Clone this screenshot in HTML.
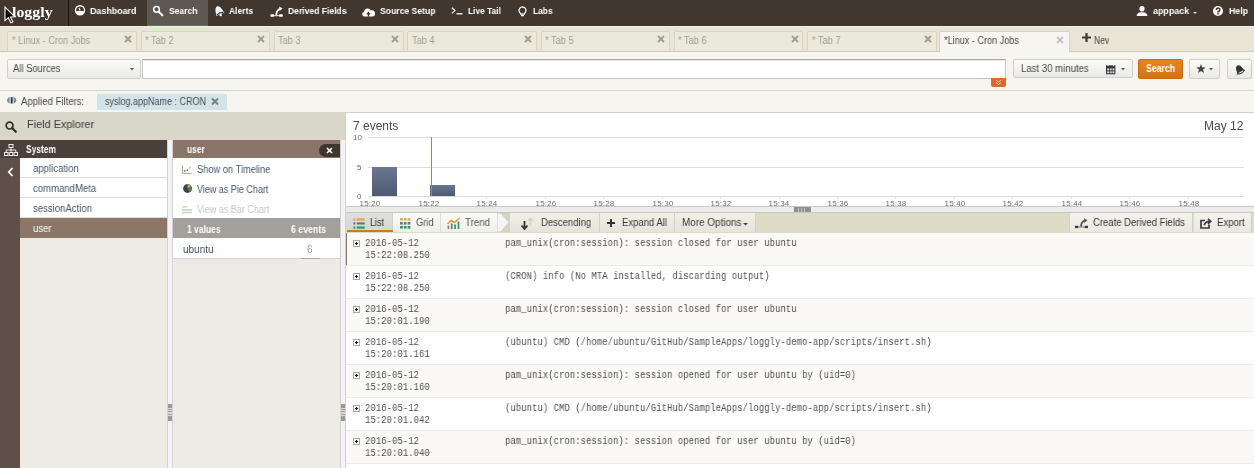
<!DOCTYPE html>
<html><head><meta charset="utf-8"><style>
*{box-sizing:border-box;margin:0;padding:0}
html,body{width:1254px;height:468px;overflow:hidden;background:#f6f5f0;font-family:"Liberation Sans",sans-serif;font-size:10px;color:#333}
body{position:relative}
div,span,svg{position:absolute}
.s{white-space:nowrap;line-height:12px;font-size:10px;transform-origin:0 0;will-change:transform}
.b{font-weight:bold}
.w{color:#fff}
.m{font-family:"Liberation Mono",monospace;font-size:10px;line-height:12px;white-space:nowrap;transform-origin:0 0;color:#505050;will-change:transform}
.btn{border:1px solid #cfcfca;border-radius:2px;background:linear-gradient(#fbfbfa,#e9e9e5)}
</style></head><body>
<div style="left:0px;top:0px;width:1254px;height:26px;background:#41372f;"></div>
<div style="left:68px;top:0px;width:1px;height:26px;background:#1c1612;"></div>
<div style="left:147px;top:0px;width:61px;height:26px;background:#5f5751;"></div>
<div style="left:147px;top:25px;width:61px;height:1px;background:#9a5a38;"></div>
<div class="s w" style="left:12.4px;top:2.7px;transform:scaleX(1.06);font-family:'Liberation Serif',serif;font-size:15px;line-height:18px;font-weight:bold">loggly</div>
<div class="s w b" style="left:90.2px;top:5.2px;transform:scaleX(0.9368);font-size:9.5px">Dashboard</div>
<div class="s w b" style="left:168.5px;top:5.2px;transform:scaleX(0.8947);font-size:9.5px">Search</div>
<div class="s w b" style="left:228.8px;top:5.2px;transform:scaleX(0.8947);font-size:9.5px">Alerts</div>
<div class="s w b" style="left:288.2px;top:5.2px;transform:scaleX(0.9);font-size:9.5px">Derived Fields</div>
<div class="s w b" style="left:380px;top:5.2px;transform:scaleX(0.9053);font-size:9.5px">Source Setup</div>
<div class="s w b" style="left:468px;top:5.2px;transform:scaleX(0.8789);font-size:9.5px">Live Tail</div>
<div class="s w b" style="left:533px;top:5.2px;transform:scaleX(0.8842);font-size:9.5px">Labs</div>
<div class="s w b" style="left:1152.5px;top:5.2px;transform:scaleX(0.9368);font-size:9.5px">apppack</div>
<div class="s w b" style="left:1228.5px;top:5.2px;transform:scaleX(0.9263);font-size:9.5px">Help</div>
<svg style="left:74px;top:4px" width="12" height="13" viewBox="0 0 12 13"><circle cx="6" cy="6.3" r="4.55" stroke="#fff" stroke-width="1.3" fill="none"/><path d="M1.6 7.4 Q6 6.2 10.4 7.4 A4.5 4.5 0 0 1 1.6 7.4 Z" fill="#fff"/><path d="M4.9 3.9 L6.1 6.2" stroke="#fff" stroke-width="1.1"/></svg>
<svg style="left:152px;top:4px" width="12" height="13" viewBox="0 0 12 13"><circle cx="4.5" cy="5.3" r="2.9" stroke="#fff" stroke-width="1.5" fill="none"/><path d="M7 8 L10.3 11.2" stroke="#fff" stroke-width="2.1" stroke-linecap="round"/></svg>
<svg style="left:213px;top:4px" width="12" height="13" viewBox="0 0 12 13"><g transform="rotate(-22 6 7)"><path d="M1.5 10.5 C2.8 8.5 2 3 6 2 C10 3 9.2 8.5 10.5 10.5 Z" fill="#fff"/><path d="M2.2 9.8 Q6 8.2 9.8 9.8" stroke="#41372f" stroke-width="1.1" fill="none"/><circle cx="6" cy="11.4" r="1.2" fill="#fff"/></g></svg>
<svg style="left:270px;top:5px" width="14" height="13" viewBox="0 0 14 13"><rect x="0.4" y="9.2" width="3.8" height="2.6" rx=".8" fill="#fff"/><rect x="9" y="9.2" width="3.8" height="2.6" rx=".8" fill="#fff"/><rect x="4" y="10" width="5" height="1.2" fill="#cfc8c0"/><path d="M6.3 10.2 C6.4 6.6 7.6 4.6 10.2 3.8" stroke="#fff" stroke-width="1.8" fill="none"/><path d="M9.2 1.4 L12.6 3.4 L9.6 6 Z" fill="#fff"/></svg>
<svg style="left:362px;top:7px" width="13" height="10" viewBox="0 0 13 10"><path d="M2.6 9.6 A2.5 2.5 0 0 1 2 4.7 A3.7 3.7 0 0 1 8.9 3.4 A3.1 3.1 0 0 1 10.7 9.6 Z" fill="#fff"/><path d="M6.5 9.6 V6.2 M4.9 7.4 L6.5 5.6 L8.1 7.4" stroke="#41372f" stroke-width="1.3" fill="none"/></svg>
<svg style="left:451px;top:7px" width="12" height="8" viewBox="0 0 12 8"><path d="M0.8 0.8 L4 3.6 L0.8 6.4" stroke="#fff" stroke-width="1.2" fill="none"/><path d="M5.5 6.8 H11.5" stroke="#fff" stroke-width="1.3"/></svg>
<svg style="left:518px;top:6px" width="9" height="11" viewBox="0 0 9 11"><path d="M4.5 0.8 A3.6 3.6 0 0 1 6.6 7.2 L6.4 8.2 H2.6 L2.4 7.2 A3.6 3.6 0 0 1 4.5 0.8 Z" stroke="#fff" stroke-width="1.2" fill="none"/><path d="M3 9.6 H6" stroke="#fff" stroke-width="1.3"/></svg>
<svg style="left:1136px;top:6px" width="12" height="10" viewBox="0 0 12 10"><ellipse cx="6" cy="2.8" rx="2.6" ry="2.8" fill="#fff"/><path d="M0.6 10 C1 6.6 4 6.4 6 6.3 C8 6.4 11 6.6 11.4 10 Z" fill="#fff"/></svg>
<svg style="left:1193px;top:11.5px" width="4" height="2" viewBox="0 0 4 2"><path d="M0 0 H4 L2 2 Z" fill="#ddd"/></svg>
<svg style="left:1212.9px;top:6.1px" width="10" height="10" viewBox="0 0 10 10"><circle cx="5" cy="5" r="5" fill="#fff"/><path d="M3.3 3.9 A1.75 1.75 0 1 1 5 5.6 V6.4" stroke="#41372f" stroke-width="1.5" fill="none"/><rect x="4.25" y="7.1" width="1.5" height="1.5" fill="#41372f"/></svg>
<svg style="left:3.7px;top:5.9px" width="13" height="19" viewBox="0 0 13 19"><path d="M1 1 L1 14.6 L4.3 11.7 L6.9 16.8 L8.9 15.9 L6.5 10.9 L10.6 10.7 Z" fill="#000" stroke="#fff" stroke-width="1.1" stroke-linejoin="miter"/></svg>
<div style="left:0px;top:26px;width:1254px;height:26px;background:#e8e4d6;"></div>
<div style="left:0px;top:26px;width:1254px;height:1px;background:#f1eee3;"></div>
<div style="left:0px;top:51px;width:1254px;height:1px;background:#cdc9b8;"></div>
<div style="left:7.4px;top:31px;width:129.5px;height:21px;background:#ebe8dc;border:1px solid #d8d4c6;border-bottom:1px solid #cdc9b8;border-radius:2px 2px 0 0"></div>
<div class="s " style="left:11.7px;top:34.5px;transform:scaleX(0.92);color:#a19d8f">* Linux - Cron Jobs</div>
<svg style="left:124.0px;top:35.4px" width="8" height="8" viewBox="0 0 8 8"><path d="M1 1 L7 7 M7 1 L1 7" stroke="#a29e92" stroke-width="1.9"/></svg>
<div style="left:140.7px;top:31px;width:129.5px;height:21px;background:#ebe8dc;border:1px solid #d8d4c6;border-bottom:1px solid #cdc9b8;border-radius:2px 2px 0 0"></div>
<div class="s " style="left:145.0px;top:34.5px;transform:scaleX(0.92);color:#a19d8f">* Tab 2</div>
<svg style="left:257.29999999999995px;top:35.4px" width="8" height="8" viewBox="0 0 8 8"><path d="M1 1 L7 7 M7 1 L1 7" stroke="#a29e92" stroke-width="1.9"/></svg>
<div style="left:274.0px;top:31px;width:129.5px;height:21px;background:#ebe8dc;border:1px solid #d8d4c6;border-bottom:1px solid #cdc9b8;border-radius:2px 2px 0 0"></div>
<div class="s " style="left:278.3px;top:34.5px;transform:scaleX(0.92);color:#a19d8f">Tab 3</div>
<svg style="left:390.6px;top:35.4px" width="8" height="8" viewBox="0 0 8 8"><path d="M1 1 L7 7 M7 1 L1 7" stroke="#a29e92" stroke-width="1.9"/></svg>
<div style="left:407.3px;top:31px;width:129.5px;height:21px;background:#ebe8dc;border:1px solid #d8d4c6;border-bottom:1px solid #cdc9b8;border-radius:2px 2px 0 0"></div>
<div class="s " style="left:411.6px;top:34.5px;transform:scaleX(0.92);color:#a19d8f">Tab 4</div>
<svg style="left:523.9px;top:35.4px" width="8" height="8" viewBox="0 0 8 8"><path d="M1 1 L7 7 M7 1 L1 7" stroke="#a29e92" stroke-width="1.9"/></svg>
<div style="left:540.6px;top:31px;width:129.5px;height:21px;background:#ebe8dc;border:1px solid #d8d4c6;border-bottom:1px solid #cdc9b8;border-radius:2px 2px 0 0"></div>
<div class="s " style="left:544.9px;top:34.5px;transform:scaleX(0.92);color:#a19d8f">* Tab 5</div>
<svg style="left:657.2px;top:35.4px" width="8" height="8" viewBox="0 0 8 8"><path d="M1 1 L7 7 M7 1 L1 7" stroke="#a29e92" stroke-width="1.9"/></svg>
<div style="left:673.9px;top:31px;width:129.5px;height:21px;background:#ebe8dc;border:1px solid #d8d4c6;border-bottom:1px solid #cdc9b8;border-radius:2px 2px 0 0"></div>
<div class="s " style="left:678.1999999999999px;top:34.5px;transform:scaleX(0.92);color:#a19d8f">* Tab 6</div>
<svg style="left:790.5px;top:35.4px" width="8" height="8" viewBox="0 0 8 8"><path d="M1 1 L7 7 M7 1 L1 7" stroke="#a29e92" stroke-width="1.9"/></svg>
<div style="left:807.2px;top:31px;width:129.5px;height:21px;background:#ebe8dc;border:1px solid #d8d4c6;border-bottom:1px solid #cdc9b8;border-radius:2px 2px 0 0"></div>
<div class="s " style="left:811.5px;top:34.5px;transform:scaleX(0.92);color:#a19d8f">* Tab 7</div>
<svg style="left:923.8000000000001px;top:35.4px" width="8" height="8" viewBox="0 0 8 8"><path d="M1 1 L7 7 M7 1 L1 7" stroke="#a29e92" stroke-width="1.9"/></svg>
<div style="left:939px;top:31px;width:131px;height:21px;background:#f6f5f0;border:1px solid #d6d2c4;border-bottom:none;border-radius:2px 2px 0 0"></div>
<div class="s " style="left:943.5px;top:34.5px;transform:scaleX(0.91);color:#484848">*Linux - Cron Jobs</div>
<svg style="left:1056px;top:36px" width="8" height="8" viewBox="0 0 8 8"><path d="M1 1 L7 7 M7 1 L1 7" stroke="#c2c2c0" stroke-width="2"/></svg>
<svg style="left:1082px;top:33px" width="9" height="9" viewBox="0 0 9 9"><path d="M4.5 0 V9 M0 4.5 H9" stroke="#3d3a36" stroke-width="2.2"/></svg>
<div class="s " style="left:1094.2px;top:34.5px;transform:scaleX(0.85);color:#444">Nev</div>
<div style="left:0px;top:52px;width:1254px;height:38px;background:#f6f5f0;"></div>
<div style="left:0px;top:90px;width:1254px;height:1px;background:#d6d3ca;"></div>
<div class="btn" style="left:7px;top:59px;width:134px;height:20px"></div>
<div class="s " style="left:13.2px;top:63px;transform:scaleX(0.94);color:#4a4a4a">All Sources</div>
<svg style="left:130px;top:68px" width="4" height="3" viewBox="0 0 4 3"><path d="M0 0 H4 L2 2.5 Z" fill="#555"/></svg>
<div style="left:142px;top:59px;width:864px;height:20px;background:#fff;border:1px solid #c8c8c4;border-top-color:#a9a9a5;box-shadow:inset 0 1px 1px rgba(0,0,0,.1)"></div>
<div style="left:991px;top:78px;width:15px;height:9px;background:#d8692f;border-radius:0 0 2px 2px"></div>
<svg style="left:995px;top:79px" width="7" height="7" viewBox="0 0 7 7"><path d="M1 1 L3.5 3 L6 1 M1 3.5 L3.5 5.5 L6 3.5" stroke="#f3c9a8" stroke-width="1" fill="none"/></svg>
<div class="btn" style="left:1013px;top:59px;width:120px;height:19px"></div>
<div class="s " style="left:1020.5px;top:63px;transform:scaleX(0.96);color:#4a4a4a">Last 30 minutes</div>
<svg style="left:1106px;top:64.5px" width="10" height="10" viewBox="0 0 10 10"><rect x="0" y="0.3" width="9.4" height="9" fill="#363636"/><g fill="#d8d8d8"><rect x="1.1" y="3.4" width="1.9" height="2"/><rect x="3.8" y="3.4" width="1.9" height="2"/><rect x="6.5" y="3.4" width="1.9" height="2"/><rect x="1.1" y="6.3" width="1.9" height="2"/><rect x="3.8" y="6.3" width="1.9" height="2"/><rect x="6.5" y="6.3" width="1.9" height="2"/></g><rect x="1.5" y="0" width="1" height="1.2" fill="#eee"/><rect x="6.9" y="0" width="1" height="1.2" fill="#eee"/></svg>
<svg style="left:1121px;top:68px" width="4" height="3" viewBox="0 0 4 3"><path d="M0 0 H4 L2 2.5 Z" fill="#555"/></svg>
<div style="left:1138px;top:59px;width:45px;height:20px;background:linear-gradient(#e8841f,#d8720f);border:1px solid #c86a12;border-radius:2px"></div>
<div class="s w b" style="left:1145.5px;top:63px;transform:scaleX(0.87);">Search</div>
<div class="btn" style="left:1189px;top:59px;width:31px;height:20px"></div>
<svg style="left:1196px;top:64px" width="10" height="9" viewBox="0 0 10 9"><path d="M5 0 L6.2 3.3 L9.8 3.4 L7 5.5 L8 9 L5 7 L2 9 L3 5.5 L0.2 3.4 L3.8 3.3 Z" fill="#444"/></svg>
<svg style="left:1209px;top:68px" width="4" height="3" viewBox="0 0 4 3"><path d="M0 0 H4 L2 2.5 Z" fill="#555"/></svg>
<div class="btn" style="left:1227px;top:59px;width:25px;height:20px"></div>
<svg style="left:1234px;top:63.5px" width="11" height="11" viewBox="0 0 11 11"><g transform="rotate(-28 5.5 5.5)"><path d="M1.5 8.2 C2.6 6.4 1.8 1.6 5.5 1 C9.2 1.6 8.4 6.4 9.5 8.2 Z" fill="#333"/><path d="M1.3 8.4 Q5.5 6.6 9.7 8.4 Q5.5 11 1.3 8.4 Z" fill="#fff" stroke="#333" stroke-width=".9"/></g></svg>
<div style="left:0px;top:91px;width:1254px;height:21px;background:#f6f5f0;"></div>
<svg style="left:7.2px;top:97.2px" width="9.4" height="6.6" viewBox="0 0 9.4 6.6"><ellipse cx="4.7" cy="3.3" rx="4.6" ry="3.2" fill="#7f8b93"/><rect x="2.4" y="0.6" width="1.5" height="5.4" fill="#c3cace"/><rect x="5.5" y="0.6" width="1.5" height="5.4" fill="#c3cace"/><rect x="3.9" y="0.3" width="1.6" height="6" fill="#34404a"/></svg>
<div class="s " style="left:20.5px;top:96px;transform:scaleX(0.955);color:#484848">Applied Filters:</div>
<div style="left:97px;top:94px;width:130px;height:16px;background:#d3e4e9;"></div>
<div class="s " style="left:104.8px;top:96px;transform:scaleX(0.9);color:#4a4a4a">syslog.appName : CRON</div>
<svg style="left:211px;top:98px" width="8" height="7" viewBox="0 0 8 7"><path d="M1 0.5 L7 6.5 M7 0.5 L1 6.5" stroke="#7f7f7f" stroke-width="2"/></svg>
<div style="left:0px;top:112px;width:346px;height:28px;background:#d9d6ca;"></div>
<div style="left:0px;top:140px;width:346px;height:328px;background:#ecebe6;"></div>
<svg style="left:5px;top:121px" width="12" height="12" viewBox="0 0 12 12"><circle cx="4.6" cy="4.6" r="3.4" stroke="#2d2d2d" stroke-width="1.7" fill="none"/><path d="M7 7 L10.8 10.8" stroke="#2d2d2d" stroke-width="2.2" stroke-linecap="round"/></svg>
<div class="s " style="left:26.8px;top:118px;transform:scaleX(0.99);font-size:11px;line-height:13px;color:#3a3a3a">Field Explorer</div>
<div style="left:0px;top:140px;width:20px;height:328px;background:#5e5049;"></div>
<div style="left:0px;top:140px;width:167px;height:18px;background:#4b403a;"></div>
<svg style="left:4px;top:144px" width="14" height="12" viewBox="0 0 14 12"><rect x="5" y="0.5" width="4" height="3" stroke="#eee" fill="none"/><rect x="0.5" y="8.5" width="3.5" height="3" stroke="#eee" fill="none"/><rect x="5.2" y="8.5" width="3.5" height="3" stroke="#eee" fill="none"/><rect x="10" y="8.5" width="3.5" height="3" stroke="#eee" fill="none"/><path d="M7 3.5 V6 M2.2 8.5 V6 H11.8 V8.5 M7 6 V8.5" stroke="#eee" fill="none"/></svg>
<div class="s w b" style="left:26.2px;top:143.5px;transform:scaleX(0.84);">System</div>
<svg style="left:7px;top:166.5px" width="7" height="10" viewBox="0 0 7 10"><path d="M5.5 1 L1.8 5 L5.5 9" stroke="#fff" stroke-width="1.8" fill="none"/></svg>
<div style="left:20px;top:158px;width:147px;height:20px;background:#fff;"></div>
<div style="left:20px;top:177px;width:147px;height:1px;background:#dcdcdc;"></div>
<div class="s " style="left:33.2px;top:163px;transform:scaleX(0.956);color:#44566a">application</div>
<div style="left:20px;top:178px;width:147px;height:20px;background:#fff;"></div>
<div style="left:20px;top:197px;width:147px;height:1px;background:#dcdcdc;"></div>
<div class="s " style="left:33.2px;top:183px;transform:scaleX(0.956);color:#44566a">commandMeta</div>
<div style="left:20px;top:198px;width:147px;height:20px;background:#fff;"></div>
<div style="left:20px;top:217px;width:147px;height:1px;background:#dcdcdc;"></div>
<div class="s " style="left:33.2px;top:203px;transform:scaleX(0.956);color:#44566a">sessionAction</div>
<div style="left:20px;top:218px;width:147px;height:20px;background:#8b7667;"></div>
<div class="s w" style="left:33.2px;top:223px;transform:scaleX(0.956);">user</div>
<div style="left:167px;top:140px;width:6px;height:328px;background:#f3f3f6;"></div>
<div style="left:167px;top:140px;width:1px;height:328px;background:#d2d2d2;"></div>
<div style="left:172px;top:140px;width:1px;height:328px;background:#d2d2d2;"></div>
<div style="left:168px;top:404px;width:4px;height:17px;background:repeating-linear-gradient(#a0a0a0 0 1px,#d8d8d8 1px 2.5px)"></div>
<div style="left:168px;top:404px;width:4px;height:4px;background:#999;"></div>
<div style="left:168px;top:417px;width:4px;height:4px;background:#999;"></div>
<div style="left:173px;top:140px;width:167px;height:18px;background:#8a7669;"></div>
<div class="s w b" style="left:186.5px;top:143.5px;transform:scaleX(0.84);">user</div>
<div style="left:319px;top:143.5px;width:21px;height:13px;background:#3f3631;border-radius:7px 0 0 7px"></div>
<svg style="left:326px;top:146.5px" width="7" height="7" viewBox="0 0 7 7"><path d="M1 1 L6 6 M6 1 L1 6" stroke="#fff" stroke-width="1.7"/></svg>
<div style="left:173px;top:158px;width:167px;height:60px;background:#fff;"></div>
<svg style="left:182px;top:164.5px" width="10" height="9" viewBox="0 0 10 9"><path d="M0.5 0 V8.5 H9.5" stroke="#a8a8a8" stroke-width="1" fill="none"/><rect x="2.2" y="5.2" width="1.4" height="1.4" fill="#555"/><rect x="4.6" y="4.6" width="1.4" height="1.4" fill="#666"/><path d="M7 3.6 L8.6 1.6" stroke="#e0b070" stroke-width="1.1"/></svg>
<div class="s " style="left:196.8px;top:163.5px;transform:scaleX(0.93);color:#44566a">Show on Timeline</div>
<svg style="left:182.6px;top:184.4px" width="9" height="9" viewBox="0 0 9 9"><circle cx="4.5" cy="4.5" r="4.4" fill="#3f4446"/><path d="M4.5 4.5 V0.1 A4.4 4.4 0 0 1 8.3 2.3 Z" fill="#c9a060"/><path d="M4.5 4.5 L8.3 2.3 A4.4 4.4 0 0 1 6.7 8.3 Z" fill="#4f7a5c"/></svg>
<div class="s " style="left:196.8px;top:183.5px;transform:scaleX(0.9);color:#44566a">View as Pie Chart</div>
<svg style="left:182px;top:205.5px" width="10" height="8" viewBox="0 0 10 8"><rect x="0" y="0" width="5" height="1.6" fill="#f0d2a8"/><rect x="0" y="3" width="10" height="1.8" fill="#c8d8c8"/><rect x="0" y="5.8" width="10" height="1.6" fill="#d2d2d2"/></svg>
<div class="s " style="left:196.8px;top:203.5px;transform:scaleX(0.9);color:#c6c6c6">View as Bar Chart</div>
<div style="left:173px;top:218px;width:167px;height:20px;background:#a3a09c;"></div>
<div class="s w b" style="left:186.5px;top:223.5px;transform:scaleX(0.85);">1 values</div>
<div class="s w b" style="left:290.8px;top:223.5px;transform:scaleX(0.875);">6 events</div>
<div style="left:173px;top:238px;width:167px;height:20px;background:#fff;"></div>
<div style="left:173px;top:258px;width:167px;height:1px;background:#d6d6d6;"></div>
<div class="s " style="left:183.2px;top:243.5px;color:#44566a">ubuntu</div>
<div class="s " style="left:307.2px;top:243.5px;color:#999">6</div>
<div style="left:301px;top:258px;width:19px;height:1px;background:#a8a8a8;"></div>
<div style="left:340px;top:140px;width:6px;height:328px;background:#f3f3f6;"></div>
<div style="left:340px;top:140px;width:1px;height:328px;background:#d2d2d2;"></div>
<div style="left:345px;top:140px;width:1px;height:328px;background:#d2d2d2;"></div>
<div style="left:341px;top:404px;width:4px;height:17px;background:repeating-linear-gradient(#a0a0a0 0 1px,#d8d8d8 1px 2.5px)"></div>
<div style="left:341px;top:404px;width:4px;height:4px;background:#999;"></div>
<div style="left:341px;top:417px;width:4px;height:4px;background:#999;"></div>
<div style="left:346px;top:112px;width:908px;height:356px;background:#fff;"></div>
<div style="left:346px;top:112px;width:908px;height:1px;background:#d0cfc8;"></div>
<div style="left:345px;top:112px;width:1px;height:28px;background:#d2d2cc;"></div>
<div class="s " style="left:352.8px;top:119px;font-size:12px;line-height:14px;color:#4a4a4a">7 events</div>
<div class="s " style="left:1204.2px;top:119px;font-size:12px;line-height:14px;color:#4a4a4a">May 12</div>
<div style="left:368px;top:137px;width:876px;height:1px;background:#dcdcdc;"></div>
<div style="left:368px;top:167px;width:876px;height:1px;background:#dcdcdc;"></div>
<div style="left:368px;top:196px;width:876px;height:1px;background:#dcdcdc;"></div>
<div class="s" style="left:353px;top:133px;font-size:8px;line-height:10px;color:#666">10</div>
<div class="s" style="left:357px;top:163px;font-size:8px;line-height:10px;color:#666">5</div>
<div class="s" style="left:357px;top:192px;font-size:8px;line-height:10px;color:#666">0</div>
<div style="left:372px;top:167px;width:25px;height:29px;background:linear-gradient(#6a7590,#4f5a72)"></div>
<div style="left:430px;top:185px;width:25px;height:11px;background:linear-gradient(#6a7590,#4f5a72)"></div>
<div style="left:431px;top:137px;width:1.2px;height:59px;background:#a58472;"></div>
<div style="left:369px;top:196px;width:1px;height:3px;background:#e2e2e2;"></div>
<div class="s" style="left:358.2px;top:198.5px;width:24px;text-align:center;font-size:8px;line-height:10px;color:#6e6e6e;letter-spacing:0.2px">15:20</div>
<div style="left:428px;top:196px;width:1px;height:3px;background:#e2e2e2;"></div>
<div class="s" style="left:416.6px;top:198.5px;width:24px;text-align:center;font-size:8px;line-height:10px;color:#6e6e6e;letter-spacing:0.2px">15:22</div>
<div style="left:486px;top:196px;width:1px;height:3px;background:#e2e2e2;"></div>
<div class="s" style="left:475.1px;top:198.5px;width:24px;text-align:center;font-size:8px;line-height:10px;color:#6e6e6e;letter-spacing:0.2px">15:24</div>
<div style="left:545px;top:196px;width:1px;height:3px;background:#e2e2e2;"></div>
<div class="s" style="left:533.6px;top:198.5px;width:24px;text-align:center;font-size:8px;line-height:10px;color:#6e6e6e;letter-spacing:0.2px">15:26</div>
<div style="left:603px;top:196px;width:1px;height:3px;background:#e2e2e2;"></div>
<div class="s" style="left:592.0px;top:198.5px;width:24px;text-align:center;font-size:8px;line-height:10px;color:#6e6e6e;letter-spacing:0.2px">15:28</div>
<div style="left:662px;top:196px;width:1px;height:3px;background:#e2e2e2;"></div>
<div class="s" style="left:650.5px;top:198.5px;width:24px;text-align:center;font-size:8px;line-height:10px;color:#6e6e6e;letter-spacing:0.2px">15:30</div>
<div style="left:720px;top:196px;width:1px;height:3px;background:#e2e2e2;"></div>
<div class="s" style="left:708.9px;top:198.5px;width:24px;text-align:center;font-size:8px;line-height:10px;color:#6e6e6e;letter-spacing:0.2px">15:32</div>
<div style="left:779px;top:196px;width:1px;height:3px;background:#e2e2e2;"></div>
<div class="s" style="left:767.4px;top:198.5px;width:24px;text-align:center;font-size:8px;line-height:10px;color:#6e6e6e;letter-spacing:0.2px">15:34</div>
<div style="left:837px;top:196px;width:1px;height:3px;background:#e2e2e2;"></div>
<div class="s" style="left:825.8px;top:198.5px;width:24px;text-align:center;font-size:8px;line-height:10px;color:#6e6e6e;letter-spacing:0.2px">15:36</div>
<div style="left:895px;top:196px;width:1px;height:3px;background:#e2e2e2;"></div>
<div class="s" style="left:884.3px;top:198.5px;width:24px;text-align:center;font-size:8px;line-height:10px;color:#6e6e6e;letter-spacing:0.2px">15:38</div>
<div style="left:954px;top:196px;width:1px;height:3px;background:#e2e2e2;"></div>
<div class="s" style="left:942.7px;top:198.5px;width:24px;text-align:center;font-size:8px;line-height:10px;color:#6e6e6e;letter-spacing:0.2px">15:40</div>
<div style="left:1012px;top:196px;width:1px;height:3px;background:#e2e2e2;"></div>
<div class="s" style="left:1001.2px;top:198.5px;width:24px;text-align:center;font-size:8px;line-height:10px;color:#6e6e6e;letter-spacing:0.2px">15:42</div>
<div style="left:1071px;top:196px;width:1px;height:3px;background:#e2e2e2;"></div>
<div class="s" style="left:1059.6px;top:198.5px;width:24px;text-align:center;font-size:8px;line-height:10px;color:#6e6e6e;letter-spacing:0.2px">15:44</div>
<div style="left:1129px;top:196px;width:1px;height:3px;background:#e2e2e2;"></div>
<div class="s" style="left:1118.0px;top:198.5px;width:24px;text-align:center;font-size:8px;line-height:10px;color:#6e6e6e;letter-spacing:0.2px">15:46</div>
<div style="left:1188px;top:196px;width:1px;height:3px;background:#e2e2e2;"></div>
<div class="s" style="left:1176.5px;top:198.5px;width:24px;text-align:center;font-size:8px;line-height:10px;color:#6e6e6e;letter-spacing:0.2px">15:48</div>
<div style="left:346px;top:206px;width:908px;height:1px;background:#c9c9c9;"></div>
<div style="left:346px;top:207px;width:908px;height:6px;background:#ececec;"></div>
<div style="left:794px;top:207px;width:17px;height:5px;background:#8f8f8f"></div>
<div style="left:798px;top:207.5px;width:9px;height:4px;background:repeating-linear-gradient(90deg,#c8c8c8 0 1px,#8f8f8f 1px 3px)"></div>
<div style="left:346px;top:212px;width:908px;height:21px;background:#dedbc6;"></div>
<div style="left:346px;top:212px;width:908px;height:1px;background:#c9c7b6;"></div>
<div style="left:346px;top:213px;width:47px;height:19px;background:linear-gradient(#dfdfdd,#d6d6d3);border-right:1px solid #cfcfcc"></div>
<div style="left:347px;top:229.7px;width:46px;height:2.3px;background:#c87a2a;"></div>
<div style="left:393px;top:213px;width:48px;height:19px;background:linear-gradient(#fafaf9,#efefec);border-right:1px solid #dcdcd8"></div>
<div style="left:441px;top:213px;width:57px;height:19px;background:linear-gradient(#fafaf9,#efefec);border-right:1px solid #dcdcd8"></div>
<svg style="left:497px;top:213px" width="16" height="19" viewBox="0 0 16 19"><path d="M13.5 9.5 L5 19 H16 V0 H5 Z" fill="#cdcbbd" opacity=".5"/><path d="M0 0 H4 L12 9.5 L4 19 H0 Z" fill="#f5f5f3" stroke="#c8c8c4" stroke-width="1"/></svg>
<div style="left:510px;top:213px;width:90px;height:19px;background:linear-gradient(#f1efe7,#e6e4d9);border-right:1px solid #d3d1c6"></div>
<div style="left:600px;top:213px;width:75px;height:19px;background:linear-gradient(#f1efe7,#e6e4d9);border-right:1px solid #d3d1c6"></div>
<div style="left:675px;top:213px;width:81px;height:19px;background:linear-gradient(#f1efe7,#e6e4d9);border-right:1px solid #d3d1c6"></div>
<div style="left:1070px;top:213px;width:123px;height:19px;background:linear-gradient(#f3f2ed,#e9e8e2);border-right:1px solid #d3d1c6"></div>
<div style="left:1194px;top:213px;width:58px;height:19px;background:linear-gradient(#f3f2ed,#e9e8e2);border-right:1px solid #d3d1c6"></div>
<div style="left:1069px;top:213px;width:1px;height:19px;background:#d3d1c6;"></div>
<div class="s " style="left:370.4px;top:216.8px;transform:scaleX(0.9);color:#333">List</div>
<div class="s " style="left:415.5px;top:216.8px;transform:scaleX(0.94);color:#555">Grid</div>
<div class="s " style="left:464.5px;top:216.8px;transform:scaleX(0.97);color:#555">Trend</div>
<div class="s " style="left:540.8px;top:216.8px;transform:scaleX(0.95);color:#3a3a3a">Descending</div>
<div class="s " style="left:622.2px;top:216.8px;transform:scaleX(0.95);color:#3a3a3a">Expand All</div>
<div class="s " style="left:681.8px;top:216.8px;transform:scaleX(0.99);color:#3a3a3a">More Options</div>
<svg style="left:742.5px;top:222.5px" width="5" height="3" viewBox="0 0 5 3"><path d="M0 0 H5 L2.5 2.5 Z" fill="#444"/></svg>
<div class="s " style="left:1092.8px;top:216.8px;transform:scaleX(0.95);color:#333">Create Derived Fields</div>
<div class="s " style="left:1217.1px;top:216.8px;transform:scaleX(0.96);color:#333">Export</div>
<svg style="left:352.5px;top:218px" width="12" height="11" viewBox="0 0 12 11"><g fill="#e2a860"><rect x="0.4" y="0.2" width="2" height="2.4"/><rect x="3.8" y="0.2" width="7.9" height="2.4"/></g><g fill="#6e6e6e"><rect x="0.4" y="4.4" width="2" height="2.1"/><rect x="3.8" y="4.4" width="7.9" height="2.1"/></g><g fill="#2f9a68"><rect x="0.4" y="8.4" width="2" height="2.3"/><rect x="3.8" y="8.4" width="7.9" height="2.3"/></g></svg>
<svg style="left:399.5px;top:218px" width="11" height="11" viewBox="0 0 11 11"><g fill="#d4ac66"><rect x="0" y="0" width="2.8" height="2.6"/><rect x="3.8" y="0" width="2.8" height="2.6"/><rect x="7.6" y="0" width="2.8" height="2.6"/></g><g fill="#767676"><rect x="0" y="4" width="2.8" height="2.6"/><rect x="3.8" y="4" width="2.8" height="2.6"/><rect x="7.6" y="4" width="2.8" height="2.6"/></g><g fill="#2f9a68"><rect x="0" y="8" width="2.8" height="2.6"/><rect x="3.8" y="8" width="2.8" height="2.6"/><rect x="7.6" y="8" width="2.8" height="2.6"/></g></svg>
<svg style="left:447px;top:217px" width="14" height="13" viewBox="0 0 14 13"><rect x="0.6" y="8.5" width="1.6" height="3.5" fill="#8a7a70"/><rect x="3.8" y="6.5" width="1.8" height="5.5" fill="#3a9a6a"/><rect x="7.2" y="7.5" width="1.8" height="4.5" fill="#3a9a6a"/><rect x="10.6" y="4.5" width="1.8" height="7.5" fill="#3a9a6a"/><path d="M0.5 7 L4.2 3.5 L7.5 5.5 L12.5 1" stroke="#e39a48" stroke-width="1.6" fill="none"/></svg>
<svg style="left:519.5px;top:216.5px" width="15" height="13" viewBox="0 0 15 13"><path d="M4.5 4 V11 M1.5 8.5 L4.5 12 L7.5 8.5" stroke="#3a3a3a" stroke-width="1.9" fill="none"/><path d="M10.5 8 V1.8 M8.2 4 L10.5 1.2 L12.8 4" stroke="#cfd2c4" stroke-width="1.6" fill="none"/></svg>
<svg style="left:607px;top:219px" width="8" height="8" viewBox="0 0 8 8"><path d="M4 0 V8 M0 4 H8" stroke="#333" stroke-width="1.9"/></svg>
<svg style="left:1074.8px;top:217px" width="14" height="13" viewBox="0 0 14 13"><rect x="0" y="8.8" width="3.4" height="2.3" fill="#3a3a3a"/><rect x="9.6" y="8.8" width="3.4" height="2.3" fill="#3a3a3a"/><rect x="3.4" y="9.2" width="6.2" height="1.5" fill="#9a9a9a"/><path d="M6 9.4 C6.2 6.2 7.4 4.4 10 3.7" stroke="#555" stroke-width="1.9" fill="none"/><path d="M9 1.2 L12.4 3.3 L9.4 5.9 Z" fill="#555"/></svg>
<svg style="left:1200px;top:217px" width="12" height="12" viewBox="0 0 12 12"><path d="M5 3.5 H1 V11 H9 V7.5" stroke="#3a3a3a" stroke-width="1.7" fill="none"/><path d="M4.2 8.2 C5 5.2 7 4.3 9.6 4.3 M8 1.8 L10.8 4.3 L8 6.8" stroke="#3a3a3a" stroke-width="1.7" fill="none"/></svg>
<div style="left:346px;top:233px;width:908px;height:33px;background:#fbf9f6;"></div>
<div style="left:346px;top:265px;width:908px;height:1px;background:#ebebeb;"></div>
<div style="left:353px;top:239.5px;width:7px;height:7px;border:1px solid #a8a8a8;background:#f6f6f6"></div>
<svg style="left:354px;top:240.5px" width="5" height="5" viewBox="0 0 5 5"><path d="M2.5 1 V4 M1 2.5 H4" stroke="#111" stroke-width="1.1"/></svg>
<div class="m" style="left:364.7px;top:238px;transform:scaleX(.9)">2016-05-12</div>
<div class="m" style="left:364.7px;top:249.5px;transform:scaleX(.9)">15:22:08.250</div>
<div class="m" style="left:504.5px;top:238px;transform:scaleX(.9)">pam_unix(cron:session): session closed for user ubuntu</div>
<div style="left:346px;top:266px;width:908px;height:33px;background:#fff;"></div>
<div style="left:346px;top:298px;width:908px;height:1px;background:#ebebeb;"></div>
<div style="left:353px;top:272.5px;width:7px;height:7px;border:1px solid #a8a8a8;background:#f6f6f6"></div>
<svg style="left:354px;top:273.5px" width="5" height="5" viewBox="0 0 5 5"><path d="M2.5 1 V4 M1 2.5 H4" stroke="#111" stroke-width="1.1"/></svg>
<div class="m" style="left:364.7px;top:271px;transform:scaleX(.9)">2016-05-12</div>
<div class="m" style="left:364.7px;top:282.5px;transform:scaleX(.9)">15:22:08.250</div>
<div class="m" style="left:504.5px;top:271px;transform:scaleX(.9)">(CRON) info (No MTA installed, discarding output)</div>
<div style="left:346px;top:299px;width:908px;height:33px;background:#fbf9f6;"></div>
<div style="left:346px;top:331px;width:908px;height:1px;background:#ebebeb;"></div>
<div style="left:353px;top:305.5px;width:7px;height:7px;border:1px solid #a8a8a8;background:#f6f6f6"></div>
<svg style="left:354px;top:306.5px" width="5" height="5" viewBox="0 0 5 5"><path d="M2.5 1 V4 M1 2.5 H4" stroke="#111" stroke-width="1.1"/></svg>
<div class="m" style="left:364.7px;top:304px;transform:scaleX(.9)">2016-05-12</div>
<div class="m" style="left:364.7px;top:315.5px;transform:scaleX(.9)">15:20:01.190</div>
<div class="m" style="left:504.5px;top:304px;transform:scaleX(.9)">pam_unix(cron:session): session closed for user ubuntu</div>
<div style="left:346px;top:332px;width:908px;height:33px;background:#fff;"></div>
<div style="left:346px;top:364px;width:908px;height:1px;background:#ebebeb;"></div>
<div style="left:353px;top:338.5px;width:7px;height:7px;border:1px solid #a8a8a8;background:#f6f6f6"></div>
<svg style="left:354px;top:339.5px" width="5" height="5" viewBox="0 0 5 5"><path d="M2.5 1 V4 M1 2.5 H4" stroke="#111" stroke-width="1.1"/></svg>
<div class="m" style="left:364.7px;top:337px;transform:scaleX(.9)">2016-05-12</div>
<div class="m" style="left:364.7px;top:348.5px;transform:scaleX(.9)">15:20:01.161</div>
<div class="m" style="left:504.5px;top:337px;transform:scaleX(.9)">(ubuntu) CMD (/home/ubuntu/GitHub/SampleApps/loggly-demo-app/scripts/insert.sh)</div>
<div style="left:346px;top:365px;width:908px;height:33px;background:#fbf9f6;"></div>
<div style="left:346px;top:397px;width:908px;height:1px;background:#ebebeb;"></div>
<div style="left:353px;top:371.5px;width:7px;height:7px;border:1px solid #a8a8a8;background:#f6f6f6"></div>
<svg style="left:354px;top:372.5px" width="5" height="5" viewBox="0 0 5 5"><path d="M2.5 1 V4 M1 2.5 H4" stroke="#111" stroke-width="1.1"/></svg>
<div class="m" style="left:364.7px;top:370px;transform:scaleX(.9)">2016-05-12</div>
<div class="m" style="left:364.7px;top:381.5px;transform:scaleX(.9)">15:20:01.160</div>
<div class="m" style="left:504.5px;top:370px;transform:scaleX(.9)">pam_unix(cron:session): session opened for user ubuntu by (uid=0)</div>
<div style="left:346px;top:398px;width:908px;height:33px;background:#fff;"></div>
<div style="left:346px;top:430px;width:908px;height:1px;background:#ebebeb;"></div>
<div style="left:353px;top:404.5px;width:7px;height:7px;border:1px solid #a8a8a8;background:#f6f6f6"></div>
<svg style="left:354px;top:405.5px" width="5" height="5" viewBox="0 0 5 5"><path d="M2.5 1 V4 M1 2.5 H4" stroke="#111" stroke-width="1.1"/></svg>
<div class="m" style="left:364.7px;top:403px;transform:scaleX(.9)">2016-05-12</div>
<div class="m" style="left:364.7px;top:414.5px;transform:scaleX(.9)">15:20:01.042</div>
<div class="m" style="left:504.5px;top:403px;transform:scaleX(.9)">(ubuntu) CMD (/home/ubuntu/GitHub/SampleApps/loggly-demo-app/scripts/insert.sh)</div>
<div style="left:346px;top:431px;width:908px;height:33px;background:#fbf9f6;"></div>
<div style="left:346px;top:463px;width:908px;height:1px;background:#ebebeb;"></div>
<div style="left:353px;top:437.5px;width:7px;height:7px;border:1px solid #a8a8a8;background:#f6f6f6"></div>
<svg style="left:354px;top:438.5px" width="5" height="5" viewBox="0 0 5 5"><path d="M2.5 1 V4 M1 2.5 H4" stroke="#111" stroke-width="1.1"/></svg>
<div class="m" style="left:364.7px;top:436px;transform:scaleX(.9)">2016-05-12</div>
<div class="m" style="left:364.7px;top:447.5px;transform:scaleX(.9)">15:20:01.040</div>
<div class="m" style="left:504.5px;top:436px;transform:scaleX(.9)">pam_unix(cron:session): session opened for user ubuntu by (uid=0)</div>
<div style="left:346px;top:233px;width:1px;height:32px;background:#8f7262;"></div>
</body></html>
